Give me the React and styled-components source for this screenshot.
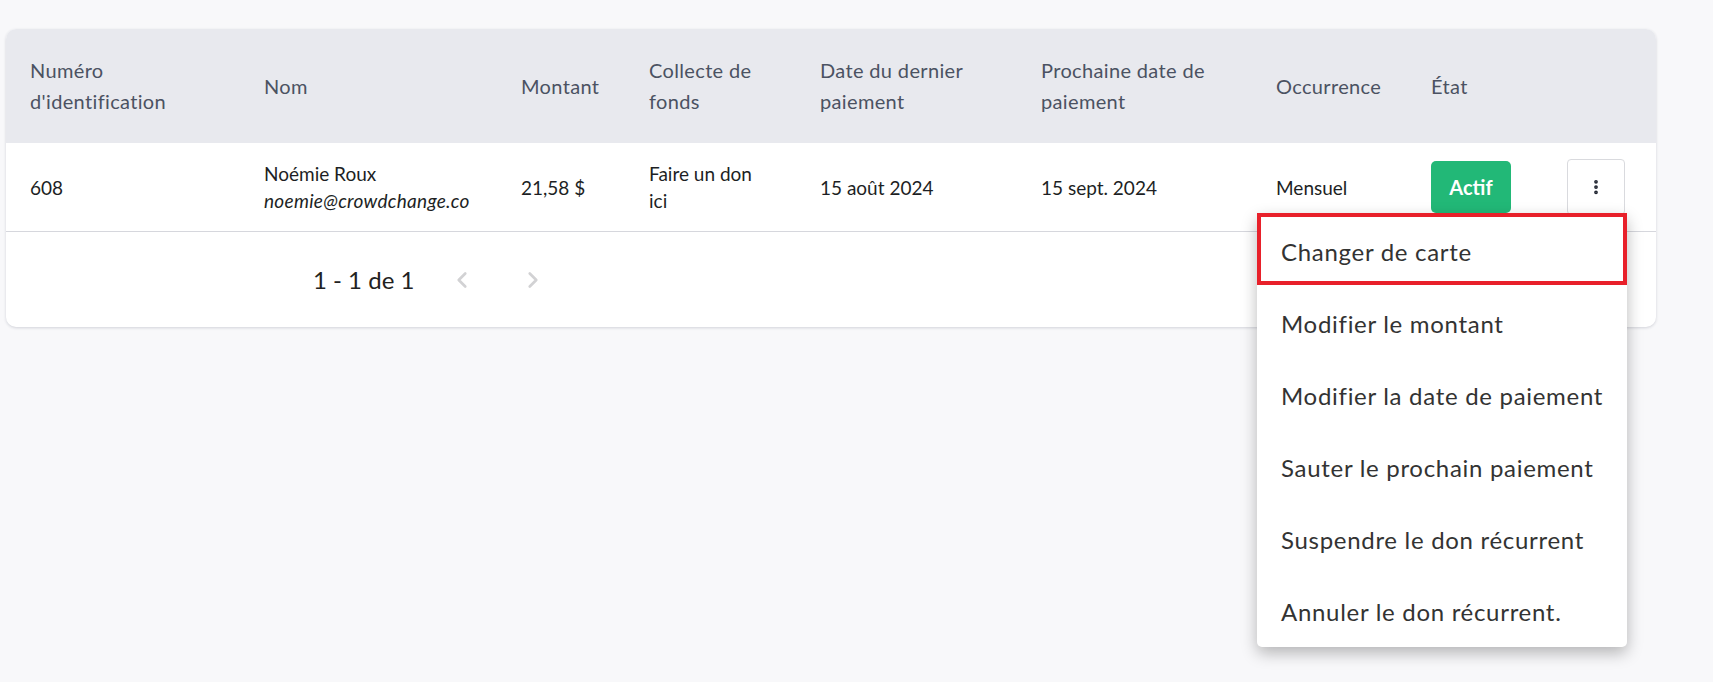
import styled, { createGlobalStyle } from "styled-components";
import { ChevronLeft, ChevronRight, MoreVertical } from "lucide-react";

const GlobalStyle = createGlobalStyle`
    html, body {
        margin: 0;
        padding: 0;
        background: #f8f8fa;
        font-family: Lato, "Open Sans", sans-serif;
    }
`;

const columns = "234px 257px 128px 171px 221px 235px 155px 136px 1fr";

const headers = [
    {label: "Numéro d'identification", max: 175},
    {label: "Nom"},
    {label: "Montant"},
    {label: "Collecte de fonds", max: 125},
    {label: "Date du dernier paiement", max: 180},
    {label: "Prochaine date de paiement", max: 200},
    {label: "Occurrence"},
    {label: "État"},
    {label: ""},
];

const menuItems = [
    "Changer de carte",
    "Modifier le montant",
    "Modifier la date de paiement",
    "Sauter le prochain paiement",
    "Suspendre le don récurrent",
    "Annuler le don récurrent.",
];

const App = () => {
    return (
        <>
            <GlobalStyle/>
            <Page>
                <Card>
                    <HeadRow>
                        {headers.map((h, i) => (
                            <HeadCell key={i}>
                                <CellText $max={h.max}>{h.label}</CellText>
                            </HeadCell>
                        ))}
                    </HeadRow>
                    <BodyRow>
                        <BodyCell>608</BodyCell>
                        <BodyCell>
                            <CellText>
                                Noémie Roux
                                <Email>noemie@crowdchange.co</Email>
                            </CellText>
                        </BodyCell>
                        <BodyCell>21,58 $</BodyCell>
                        <BodyCell><CellText $max={120}>Faire un don ici</CellText></BodyCell>
                        <BodyCell>15 août 2024</BodyCell>
                        <BodyCell>15 sept. 2024</BodyCell>
                        <BodyCell>Mensuel</BodyCell>
                        <BodyCell><StatusBadge>Actif</StatusBadge></BodyCell>
                        <BodyCell>
                            <MenuWrap>
                                <MenuButton>
                                    <MoreVertical size={18} strokeWidth={3} color="#1f2430"/>
                                </MenuButton>
                                <Dropdown>
                                    {menuItems.map((item, i) => (
                                        <MenuItem key={item} $selected={i === 0}>{item}</MenuItem>
                                    ))}
                                </Dropdown>
                            </MenuWrap>
                        </BodyCell>
                    </BodyRow>
                    <Footer>
                        <PageInfo>1 - 1 de 1</PageInfo>
                        <PagerButton><ChevronLeft size={26} strokeWidth={2.5}/></PagerButton>
                        <PagerButton><ChevronRight size={26} strokeWidth={2.5}/></PagerButton>
                    </Footer>
                </Card>
            </Page>
        </>
    );
};

export default App;

const Page = styled.div`
    min-height: 682px;
    padding: 29px 0 0 6px;
    box-sizing: border-box;
`;

const Card = styled.div`
    width: 1650px;
    background: #ffffff;
    border-radius: 10px;
    box-shadow: 0 1px 3px rgba(40, 45, 70, 0.18);
`;

const HeadRow = styled.div`
    display: grid;
    grid-template-columns: ${columns};
    height: 114px;
    background: #e8e9ee;
    border-radius: 10px 10px 0 0;
`;

const HeadCell = styled.div`
    display: flex;
    align-items: center;
    padding-left: 24px;
    font-size: 20px;
    line-height: 31px;
    letter-spacing: 0.35px;
    color: #4b5262;
`;

const CellText = styled.div`
    max-width: ${props => props.$max ? `${props.$max}px` : "none"};
`;

const BodyRow = styled.div`
    display: grid;
    grid-template-columns: ${columns};
    height: 88px;
    border-bottom: 1px solid #d6d7dd;
`;

const BodyCell = styled.div`
    display: flex;
    align-items: center;
    padding-left: 24px;
    font-size: 19px;
    line-height: 27px;
    color: #1d1f24;
`;

const Email = styled.div`
    font-style: italic;
    letter-spacing: 0.3px;
`;

const StatusBadge = styled.div`
    display: flex;
    align-items: center;
    justify-content: center;
    width: 80px;
    height: 52px;
    border-radius: 5px;
    background: #22b877;
    color: #ffffff;
    font-weight: bold;
    font-size: 20px;
`;

const MenuWrap = styled.div`
    position: relative;
`;

const MenuButton = styled.div`
    display: flex;
    align-items: center;
    justify-content: center;
    width: 58px;
    height: 56px;
    box-sizing: border-box;
    border: 1px solid #d9dade;
    border-radius: 4px;
    background: #ffffff;
`;

const Dropdown = styled.div`
    position: absolute;
    top: calc(100% - 2px);
    right: -2px;
    width: 370px;
    padding-bottom: 2px;
    background: #ffffff;
    border-radius: 5px;
    box-shadow: 0 6px 16px rgba(0, 0, 0, 0.28);
    z-index: 10;
`;

const MenuItem = styled.div`
    display: flex;
    align-items: center;
    height: 72px;
    box-sizing: border-box;
    padding: 4px 0 0 20px;
    font-size: 24px;
    letter-spacing: 0.7px;
    color: #333333;
    border: 4px solid ${props => props.$selected ? "#e8202a" : "transparent"};
`;

const Footer = styled.div`
    display: flex;
    align-items: center;
    height: 95px;
    padding-left: 307px;
`;

const PageInfo = styled.div`
    font-size: 24px;
    color: #222222;
    margin-right: 26px;
`;

const PagerButton = styled.div`
    display: flex;
    align-items: center;
    justify-content: center;
    width: 44px;
    height: 44px;
    margin-right: 27px;
    color: #d2d2d4;
`;
